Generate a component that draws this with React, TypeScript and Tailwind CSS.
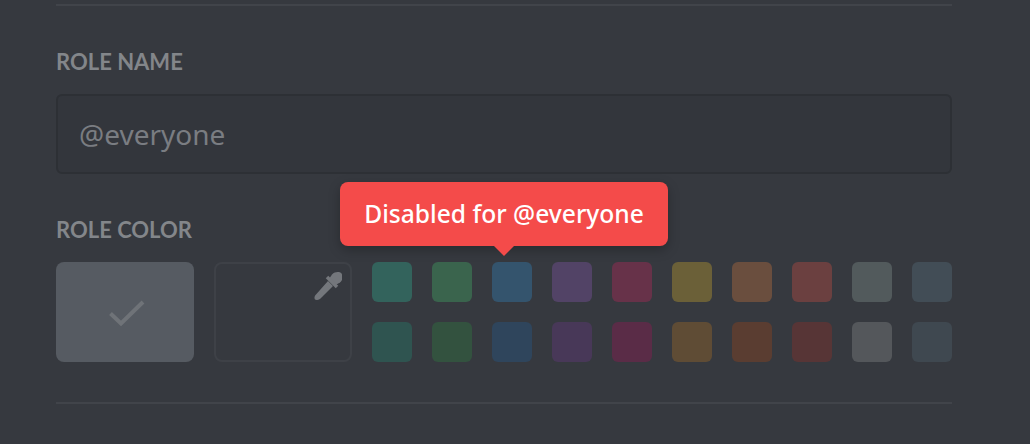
const row1 = ['#33635c', '#3a644d', '#34546d', '#524366', '#673249', '#6b6038', '#6a4e3e', '#6b4040', '#525a5c', '#424d56'];
const row2 = ['#2f5450', '#33523f', '#2f455c', '#483858', '#5a2c47', '#5f4c35', '#5a3d31', '#573536', '#54575b', '#3f4850'];

function Swatch({ color }: { color: string }) {
  return <div className="w-10 h-10 rounded-md" style={{ backgroundColor: color }} />;
}

export default function App() {
  return (
    <div className="relative w-[1030px] h-[444px] overflow-hidden bg-[#36393f] pl-[56px] pr-[78px] pt-1 font-['Noto_Sans',sans-serif]">
      <div className="h-0.5 bg-[#41444a]" />

      <h5 className="mt-[42px] h-7 text-[22px] leading-7 font-bold uppercase text-[#83868a] font-['Lato',sans-serif]">Role Name</h5>
      <div className="mt-[18px] h-20 flex items-center px-[21px] rounded-md border-2 border-[#2d3035] bg-[#33363c] text-[28px] text-[#7a7d82]">
        @everyone
      </div>

      <h5 className="mt-[42px] h-7 text-[22px] leading-7 font-bold uppercase text-[#83868a] font-['Lato',sans-serif]">Role Color</h5>
      <div className="mt-[18px] flex">
        <div className="w-[138px] h-[100px] rounded-lg bg-[#565b62] flex items-center justify-center">
          <svg className="ml-[3px] mt-[1px]" width="38" height="28" viewBox="0 0 38 28" fill="none">
            <path d="M2.5 14.5 L13 24.5 L35 3" stroke="#6f7378" strokeWidth="4" />
          </svg>
        </div>
        <div className="relative ml-5 w-[138px] h-[100px] rounded-lg border-2 border-[#3e4147]">
          <svg className="absolute right-[8px] top-[8px]" width="28" height="28" viewBox="0 0 28 28">
            <path fill="#74777c" d="M15 7 L18 2.5 C21 -0.5 25.5 -0.5 27.5 1.5 C29.5 3.7 29 8 26 10.5 L21.5 13 Z" />
            <path stroke="#74777c" strokeWidth="3.5" d="M13 5 L23 15" />
            <path fill="#74777c" d="M14 9 L19 14 L6.5 26.5 C5 28 2.5 28.5 1 27.5 C0 26 0.5 24 2 22.5 Z" />
          </svg>
        </div>
        <div className="ml-5 flex-1 flex flex-col gap-5">
          <div className="flex justify-between">
            {row1.map((c) => <Swatch key={c} color={c} />)}
          </div>
          <div className="flex justify-between">
            {row2.map((c) => <Swatch key={c} color={c} />)}
          </div>
        </div>
      </div>

      <div className="mt-10 h-0.5 bg-[#41444a]" />

      {/* tooltip */}
      <div className="absolute left-[340px] top-[182px] w-[328px] h-16 rounded-lg bg-[#f44b4a] shadow-[0_4px_12px_rgba(0,0,0,0.25)] flex items-center justify-center text-[24.6px] font-medium text-white">
        Disabled for @everyone
        <div className="absolute left-[154px] top-16 w-0 h-0 border-x-[10px] border-x-transparent border-t-[10px] border-t-[#f44b4a]" />
      </div>
    </div>
  );
}
